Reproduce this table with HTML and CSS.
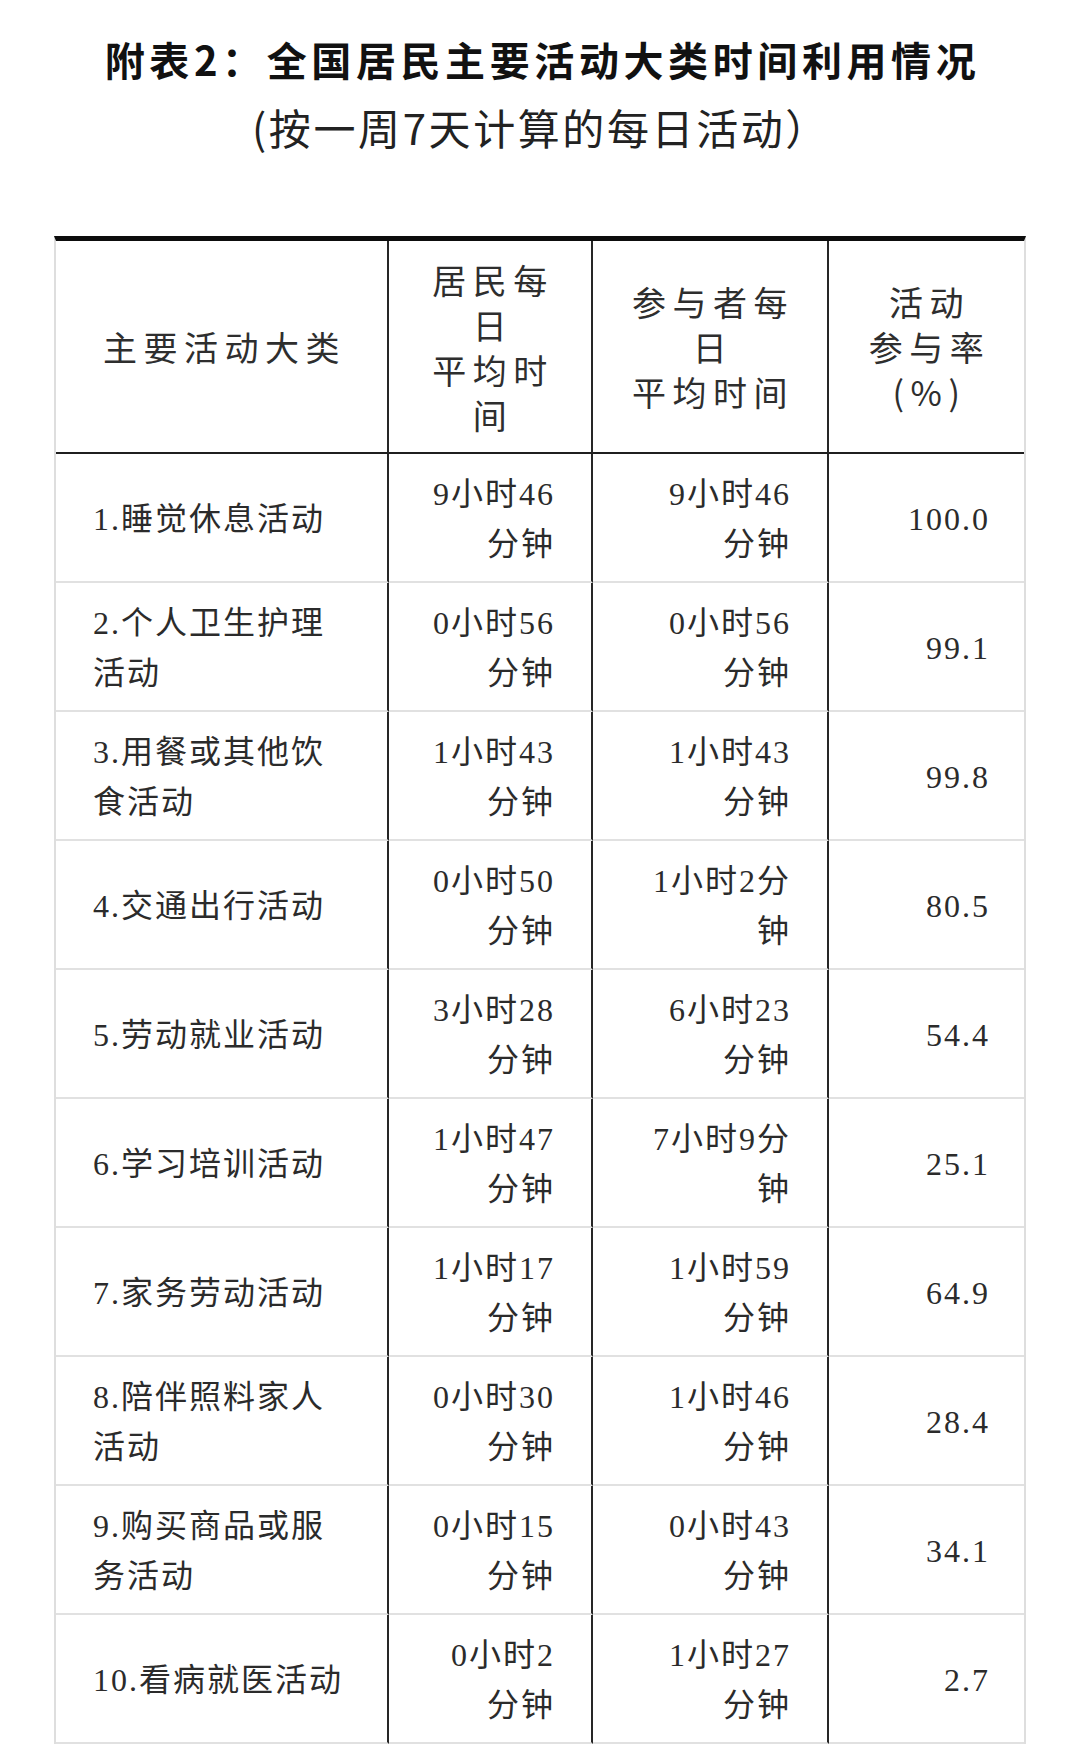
FILE: index.html
```html
<!DOCTYPE html>
<html lang="zh-CN">
<head>
<meta charset="utf-8">
<title>附表2：全国居民主要活动大类时间利用情况</title>
<link rel="stylesheet" href="styles.css">
</head>
<body>
<div class="page">
  <h1 class="title">附表2：全国居民主要活动大类时间利用情况</h1>
  <p class="subtitle">(按一周7天计算的每日活动）</p>
  <table class="data">
    <colgroup>
      <col class="c1"><col class="c2"><col class="c3"><col class="c4">
    </colgroup>
    <thead>
      <tr>
        <th class="h1">主要活动大类</th>
        <th class="h2">居民每<br>日<br>平均时<br>间</th>
        <th class="h3">参与者每<br>日<br>平均时间</th>
        <th class="h4">活动<br>参与率<br>(%)</th>
      </tr>
    </thead>
    <tbody>
      <tr><td class="name">1.睡觉休息活动</td><td class="num">9小时46<br>分钟</td><td class="num">9小时46<br>分钟</td><td class="rate">100.0</td></tr>
      <tr><td class="name">2.个人卫生护理<br>活动</td><td class="num">0小时56<br>分钟</td><td class="num">0小时56<br>分钟</td><td class="rate">99.1</td></tr>
      <tr><td class="name">3.用餐或其他饮<br>食活动</td><td class="num">1小时43<br>分钟</td><td class="num">1小时43<br>分钟</td><td class="rate">99.8</td></tr>
      <tr><td class="name">4.交通出行活动</td><td class="num">0小时50<br>分钟</td><td class="num">1小时2分<br>钟</td><td class="rate">80.5</td></tr>
      <tr><td class="name">5.劳动就业活动</td><td class="num">3小时28<br>分钟</td><td class="num">6小时23<br>分钟</td><td class="rate">54.4</td></tr>
      <tr><td class="name">6.学习培训活动</td><td class="num">1小时47<br>分钟</td><td class="num">7小时9分<br>钟</td><td class="rate">25.1</td></tr>
      <tr><td class="name">7.家务劳动活动</td><td class="num">1小时17<br>分钟</td><td class="num">1小时59<br>分钟</td><td class="rate">64.9</td></tr>
      <tr><td class="name">8.陪伴照料家人<br>活动</td><td class="num">0小时30<br>分钟</td><td class="num">1小时46<br>分钟</td><td class="rate">28.4</td></tr>
      <tr><td class="name">9.购买商品或服<br>务活动</td><td class="num">0小时15<br>分钟</td><td class="num">0小时43<br>分钟</td><td class="rate">34.1</td></tr>
      <tr><td class="name">10.看病就医活动</td><td class="num">0小时2<br>分钟</td><td class="num">1小时27<br>分钟</td><td class="rate">2.7</td></tr>
    </tbody>
  </table>
</div>
</body>
</html>
```
FILE: styles.css
```css
html, body {
  margin: 0;
  padding: 0;
  background: #ffffff;
}

body {
  font-family: "Noto Sans CJK SC", "Noto Sans", sans-serif;
  color: #2b2b2b;
}

.page {
  padding-top: 29px;
}

.title {
  margin: 0;
  font-family: "Noto Sans CJK SC", sans-serif;
  font-weight: 700;
  font-size: 40px;
  line-height: 60px;
  letter-spacing: 4.6px;
  padding-left: 5px;
  text-align: center;
  color: #111111;
}

.subtitle {
  margin: 8px 0 0;
  font-family: "Noto Sans CJK SC", sans-serif;
  font-weight: 400;
  font-size: 42px;
  line-height: 60px;
  letter-spacing: 2.6px;
  padding-left: 2px;
  text-align: center;
  color: #222222;
}

.data {
  margin: 79px 0 0 54px;
  width: 972px;
  table-layout: fixed;
  border-collapse: separate;
  border-spacing: 0;
  border-top: 5px solid #0d0d0d;
  border-left: 2px solid #dedede;
  border-right: 2px solid #dedede;
}

.c1 { width: 333px; }
.c2 { width: 204px; }
.c3 { width: 236px; }
.c4 { width: 195px; }

.data th,
.data td {
  box-sizing: border-box;
  vertical-align: middle;
  padding-top: 0;
  padding-bottom: 0;
}

.data th {
  height: 213px;
  font-family: "Noto Sans CJK SC", sans-serif;
  font-weight: 400;
  font-size: 34px;
  line-height: 45px;
  letter-spacing: 6.5px;
  text-align: center;
  color: #2e2e2e;
  padding-left: 6px;
  padding-right: 0;
  border-bottom: 2px solid #1f1f1f;
  border-right: 2px solid #262626;
}

.data th.h4 {
  border-right: none;
}

.data td {
  height: 129px;
  font-family: "Liberation Serif", "Noto Sans CJK SC", serif;
  font-size: 32px;
  line-height: 50px;
  letter-spacing: 2px;
  color: #2b2b2b;
  border-bottom: 2px solid #e1e1e1;
  border-right: 2px solid #262626;
}

.data td.name {
  text-align: left;
  padding-left: 37px;
  padding-right: 4px;
  padding-top: 3px;
}

.data td.num {
  text-align: right;
  padding-left: 4px;
  padding-right: 36px;
  padding-top: 3px;
}

.data td.rate {
  text-align: right;
  padding-left: 4px;
  padding-right: 34px;
  padding-top: 3px;
  border-right: none;
}
```
